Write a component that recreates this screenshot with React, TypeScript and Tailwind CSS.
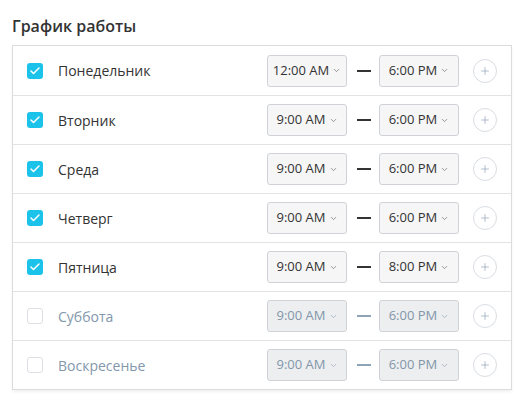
import { Check, ChevronDown, Plus } from 'lucide-react'

const days = [
  { name: 'Понедельник', on: true, from: '12:00 AM', to: '6:00 PM' },
  { name: 'Вторник', on: true, from: '9:00 AM', to: '6:00 PM' },
  { name: 'Среда', on: true, from: '9:00 AM', to: '6:00 PM' },
  { name: 'Четверг', on: true, from: '9:00 AM', to: '6:00 PM' },
  { name: 'Пятница', on: true, from: '9:00 AM', to: '8:00 PM' },
  { name: 'Суббота', on: false, from: '9:00 AM', to: '6:00 PM' },
  { name: 'Воскресенье', on: false, from: '9:00 AM', to: '6:00 PM' },
]

function TimeSelect({ value, on }: { value: string; on: boolean }) {
  return (
    <div
      className={`flex h-[32px] w-[80px] items-center justify-center gap-[3px] rounded-[3px] border border-[#cfd2d6] text-[13px] ${
        on ? 'bg-[#f6f6f6] text-[#333]' : 'bg-[#eceef0] text-[#8396a9]'
      }`}
    >
      <span>{value}</span>
      <ChevronDown size={9} strokeWidth={2} className={on ? 'text-[#777]' : 'text-[#9aaaba]'} />
    </div>
  )
}

export default function App() {
  return (
    <div className="min-h-[401px] bg-white px-3 pt-[16px] font-['Open_Sans',sans-serif]">
      <h2 className="mb-[8px] text-[16px] leading-[21px] font-semibold text-[#333]">График работы</h2>
      <div className="w-[500px] border border-[#dcdcdc] shadow-[0_2px_3px_rgba(0,0,0,0.06)]">
        {days.map((d, i) => (
          <div
            key={d.name}
            className={`flex h-[49px] items-center pr-[14px] pl-[14px] ${i > 0 ? 'border-t border-[#e3e3e3]' : ''}`}
          >
            {d.on ? (
              <div className="flex h-[16px] w-[16px] items-center justify-center rounded-[3px] bg-[#1bc3ea]">
                <Check size={12} strokeWidth={3} className="text-white" />
              </div>
            ) : (
              <div className="h-[16px] w-[16px] rounded-[3px] border border-[#dcdfe3] bg-white" />
            )}
            <span className={`ml-[15px] text-[14px] ${d.on ? 'text-[#333]' : 'text-[#8297ac]'}`}>{d.name}</span>
            <div className="ml-auto flex items-center">
              <TimeSelect value={d.from} on={d.on} />
              <div className={`mr-[8px] ml-[10px] h-[2px] w-[14px] ${d.on ? 'bg-[#333]' : 'bg-[#8fa3b6]'}`} />
              <TimeSelect value={d.to} on={d.on} />
              <div className="ml-[14px] flex h-[24px] w-[24px] items-center justify-center rounded-full border border-[#d9dde2]">
                <Plus size={12} strokeWidth={1.5} className="text-[#9aaabb]" />
              </div>
            </div>
          </div>
        ))}
      </div>
    </div>
  )
}
